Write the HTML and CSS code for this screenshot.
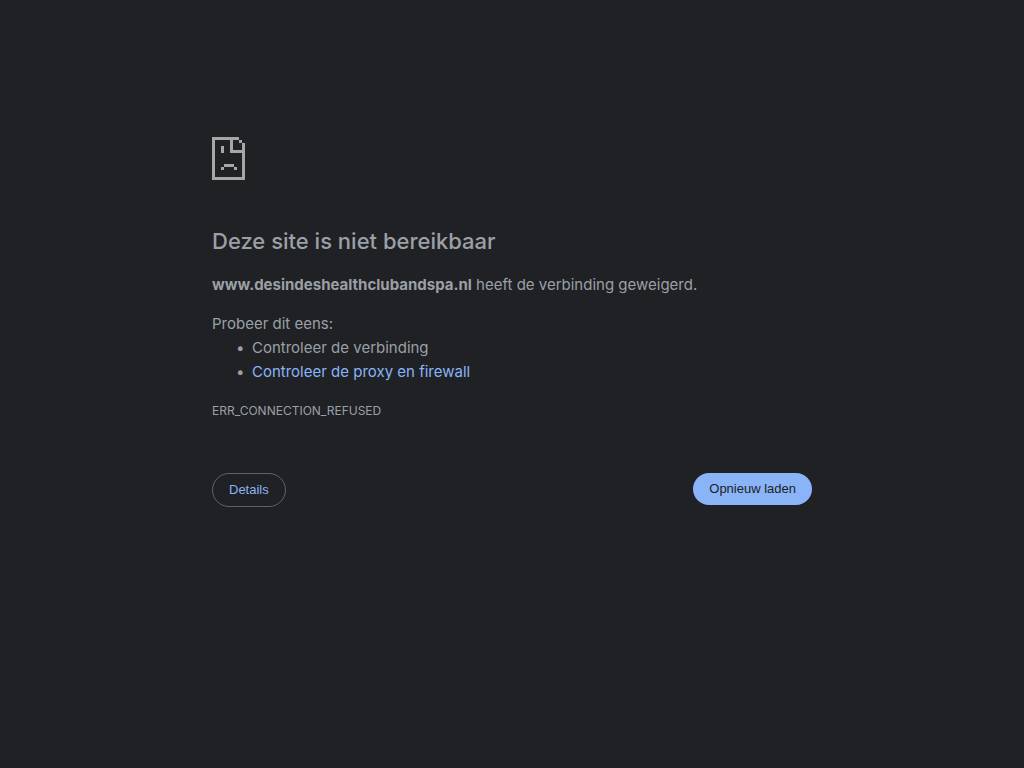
FILE: index.html
```html
<!DOCTYPE html>
<html lang="nl">
<head>
  <meta charset="UTF-8">
  <meta name="viewport" content="width=device-width, initial-scale=1.0">
  <title>www.desindeshealthclubandspa.nl</title>
  <link rel="stylesheet" href="styles.css">
</head>
<body>
  <main class="interstitial">
    <svg class="icon" viewBox="0 0 33 43" shape-rendering="crispEdges" aria-hidden="true">
      <path d="M0 0h27v3H3v37h27V16H18V3h3v10h9V6h3v37H0z"/>
      <path d="M27 3h3v3h-3zM9 9h3v7H9zM12 27h10v3H12zM9 30h3v3H9zM22 30h3v3h-3z"/>
    </svg>
    <h1>Deze site is niet bereikbaar</h1>
    <p><strong>www.desindeshealthclubandspa.nl</strong> heeft de verbinding geweigerd.</p>
    <div class="suggestions">
      <p>Probeer dit eens:</p>
      <ul>
        <li>Controleer de verbinding</li>
        <li><a href="#buttons">Controleer de proxy en firewall</a></li>
      </ul>
    </div>
    <div class="error-code">ERR_CONNECTION_REFUSED</div>
    <div class="buttons" id="buttons">
      <button class="button details" type="button">Details</button>
      <button class="button reload" type="button" onclick="location.reload()">Opnieuw laden</button>
    </div>
  </main>
</body>
</html>
```
FILE: styles.css
```css
* {
  box-sizing: border-box;
}

body {
  margin: 0;
  background: #202124;
  color: #9aa0a6;
  font-family: Inter, sans-serif;
  font-size: 15px;
  line-height: 24px;
}

.interstitial {
  max-width: 648px;
  margin: 0 auto;
  padding: 137px 24px 48px;
}

.icon {
  display: block;
  width: 33px;
  height: 43px;
  margin-bottom: 47px;
  fill: #a6a6a6;
}

h1 {
  margin: 0 0 18px;
  font-size: 22px;
  font-weight: 500;
  line-height: 28px;
}

p {
  margin: 0;
}

.suggestions {
  margin: 15px 0;
}

ul {
  margin: 0;
  padding-left: 40px;
  list-style-type: "•\2002";
}

a {
  color: #8ab4f8;
  text-decoration: none;
}

.error-code {
  font-size: 12px;
}

.buttons {
  display: flex;
  justify-content: space-between;
  align-items: flex-start;
  margin-top: 50px;
}

.button {
  border: none;
  border-radius: 20px;
  padding: 8px 16px;
  font-family: "Liberation Sans", Arial, sans-serif;
  font-size: 13px;
  line-height: 16px;
  cursor: pointer;
}

.details {
  border: 1px solid #5f6368;
  background: transparent;
  color: #8ab4f8;
}

.reload {
  background: #8ab4f8;
  color: #202124;
}
```
